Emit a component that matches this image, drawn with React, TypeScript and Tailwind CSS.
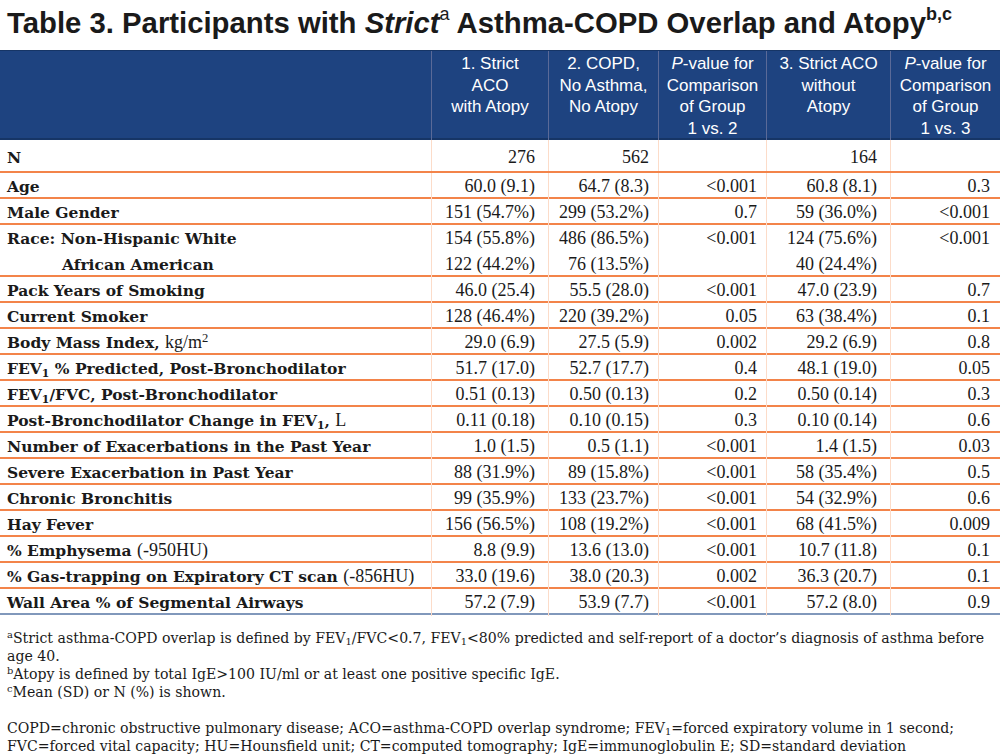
import React from "react";

type Row = {
  label: React.ReactNode;
  values: string[];
  indent?: boolean;
  noLine?: boolean;
};

const Sub = ({ children }: { children: React.ReactNode }) => (
  <sub className="text-[0.7em] align-baseline relative top-[0.25em]">{children}</sub>
);

const Reg = ({ children }: { children: React.ReactNode }) => (
  <span className="font-normal font-['Liberation_Serif',serif] text-[18px]">{children}</span>
);

const rows: Row[] = [
  { label: "Age", values: ["60.0 (9.1)", "64.7 (8.3)", "<0.001", "60.8 (8.1)", "0.3"] },
  { label: "Male Gender", values: ["151 (54.7%)", "299 (53.2%)", "0.7", "59 (36.0%)", "<0.001"] },
  { label: "Race: Non-Hispanic White", values: ["154 (55.8%)", "486 (86.5%)", "<0.001", "124 (75.6%)", "<0.001"], noLine: true },
  { label: "African American", values: ["122 (44.2%)", "76 (13.5%)", "", "40 (24.4%)", ""], indent: true },
  { label: "Pack Years of Smoking", values: ["46.0 (25.4)", "55.5 (28.0)", "<0.001", "47.0 (23.9)", "0.7"] },
  { label: "Current Smoker", values: ["128 (46.4%)", "220 (39.2%)", "0.05", "63 (38.4%)", "0.1"] },
  {
    label: (
      <>
        Body Mass Index, <Reg>kg/m<sup className="text-[0.7em]">2</sup></Reg>
      </>
    ),
    values: ["29.0 (6.9)", "27.5 (5.9)", "0.002", "29.2 (6.9)", "0.8"],
  },
  {
    label: (
      <>
        FEV<Sub>1</Sub> % Predicted, Post-Bronchodilator
      </>
    ),
    values: ["51.7 (17.0)", "52.7 (17.7)", "0.4", "48.1 (19.0)", "0.05"],
  },
  {
    label: (
      <>
        FEV<Sub>1</Sub>/FVC, Post-Bronchodilator
      </>
    ),
    values: ["0.51 (0.13)", "0.50 (0.13)", "0.2", "0.50 (0.14)", "0.3"],
  },
  {
    label: (
      <>
        Post-Bronchodilator Change in FEV<Sub>1</Sub>, <Reg>L</Reg>
      </>
    ),
    values: ["0.11 (0.18)", "0.10 (0.15)", "0.3", "0.10 (0.14)", "0.6"],
  },
  { label: "Number of Exacerbations in the Past Year", values: ["1.0 (1.5)", "0.5 (1.1)", "<0.001", "1.4 (1.5)", "0.03"] },
  { label: "Severe Exacerbation in Past Year", values: ["88 (31.9%)", "89 (15.8%)", "<0.001", "58 (35.4%)", "0.5"] },
  { label: "Chronic Bronchitis", values: ["99 (35.9%)", "133 (23.7%)", "<0.001", "54 (32.9%)", "0.6"] },
  { label: "Hay Fever", values: ["156 (56.5%)", "108 (19.2%)", "<0.001", "68 (41.5%)", "0.009"] },
  {
    label: (
      <>
        % Emphysema <Reg>(-950HU)</Reg>
      </>
    ),
    values: ["8.8 (9.9)", "13.6 (13.0)", "<0.001", "10.7 (11.8)", "0.1"],
  },
  {
    label: (
      <>
        % Gas-trapping on Expiratory CT scan <Reg>(-856HU)</Reg>
      </>
    ),
    values: ["33.0 (19.6)", "38.0 (20.3)", "0.002", "36.3 (20.7)", "0.1"],
  },
  { label: "Wall Area % of Segmental Airways", values: ["57.2 (7.9)", "53.9 (7.7)", "<0.001", "57.2 (8.0)", "0.9"], noLine: true },
];

const grid = "grid grid-cols-[431px_117px_110px_108px_124px_110px]";
const pads = ["pr-[13px]", "pr-[9px]", "pr-[9px]", "pr-[13px]", "pr-[10px]"];

function DataCells({ values, top }: { values: string[]; top?: boolean }) {
  return (
    <>
      {values.map((v, i) => (
        <div
          key={i}
          className={`border-l border-[#fcdcc9] flex items-center justify-end font-['Liberation_Serif',serif] text-[18px] text-[#1a1a1a] ${pads[i]} ${top ? "pt-[4px]" : ""}`}
        >
          {v}
        </div>
      ))}
    </>
  );
}

export default function App() {
  return (
    <div className="w-[1000px] h-[756px] bg-white overflow-hidden">
      <h1 className="h-[50px] pl-[7px] pt-[3px] font-['Liberation_Sans',Arial,sans-serif] font-bold text-[29.3px] leading-[40px] text-[#1a1a1a] whitespace-nowrap">
        Table 3. Participants with <i>Strict</i>
        <sup className="text-[18px] font-normal top-[-0.75em]">a</sup> Asthma-COPD Overlap and Atopy
        <sup className="text-[18px] top-[-0.75em]">b,c</sup>
      </h1>

      <div className={`${grid} h-[90px] bg-[#1e4380] border-t border-[#163566] border-b-2 border-b-[#163566] font-['Liberation_Sans',Arial,sans-serif] text-[17px] leading-[21.7px] text-white text-center`}>
        <div />
        <div className="border-l border-[#5a6a98] pt-[2px]">
          1. Strict
          <br />
          ACO
          <br />
          with Atopy
        </div>
        <div className="border-l border-[#5a6a98] pt-[2px]">
          2. COPD,
          <br />
          No Asthma,
          <br />
          No Atopy
        </div>
        <div className="border-l border-[#5a6a98] pt-[2px]">
          <i>P</i>-value for
          <br />
          Comparison
          <br />
          of Group
          <br />
          1 vs. 2
        </div>
        <div className="border-l border-[#5a6a98] pt-[2px]">
          3. Strict ACO
          <br />
          without
          <br />
          Atopy
        </div>
        <div className="border-l border-[#5a6a98] pt-[2px]">
          <i>P</i>-value for
          <br />
          Comparison
          <br />
          of Group
          <br />
          1 vs. 3
        </div>
      </div>

      <div className={`${grid} h-[33px] border-b-2 border-[#f3844a]`}>
        <div className="pl-[7px] pt-[4px] flex items-center font-['DejaVu_Serif',serif] font-bold text-[15.5px] text-[#1a1a1a]">N</div>
        <DataCells values={["276", "562", "", "164", ""]} top />
      </div>

      {rows.map((r, i) => (
        <div
          key={i}
          className={`${grid} h-[26px] ${r.noLine ? "" : "border-b-2 border-[#f3844a]"} ${i === rows.length - 1 ? "border-b-2 border-[#8198bb]" : ""}`}
        >
          <div
            className={`${r.indent ? "pl-[62px]" : "pl-[7px]"} flex items-center whitespace-nowrap font-['DejaVu_Serif',serif] font-bold text-[15.5px] text-[#1a1a1a]`}
          >
            <span>{r.label}</span>
          </div>
          <DataCells values={r.values} />
        </div>
      ))}

      <div className="pl-[7px] pt-[14px] font-['DejaVu_Serif',serif] text-[14.1px] leading-[18px] text-[#1a1a1a] whitespace-nowrap">
        <div>
          <sup className="text-[0.7em] top-[-0.5em]">a</sup>Strict asthma-COPD overlap is defined by FEV<Sub>1</Sub>/FVC&lt;0.7, FEV
          <Sub>1</Sub>&lt;80% predicted and self-report of a doctor’s diagnosis of asthma before
        </div>
        <div>age 40.</div>
        <div>
          <sup className="text-[0.7em] top-[-0.5em]">b</sup>Atopy is defined by total IgE&gt;100 IU/ml or at least one positive specific IgE.
        </div>
        <div>
          <sup className="text-[0.7em] top-[-0.5em]">c</sup>Mean (SD) or N (%) is shown.
        </div>
        <div className="h-[18px]" />
        <div>
          COPD=chronic obstructive pulmonary disease; ACO=asthma-COPD overlap syndrome; FEV<Sub>1</Sub>=forced expiratory volume in 1 second;
        </div>
        <div>FVC=forced vital capacity; HU=Hounsfield unit; CT=computed tomography; IgE=immunoglobulin E; SD=standard deviation</div>
      </div>
    </div>
  );
}
